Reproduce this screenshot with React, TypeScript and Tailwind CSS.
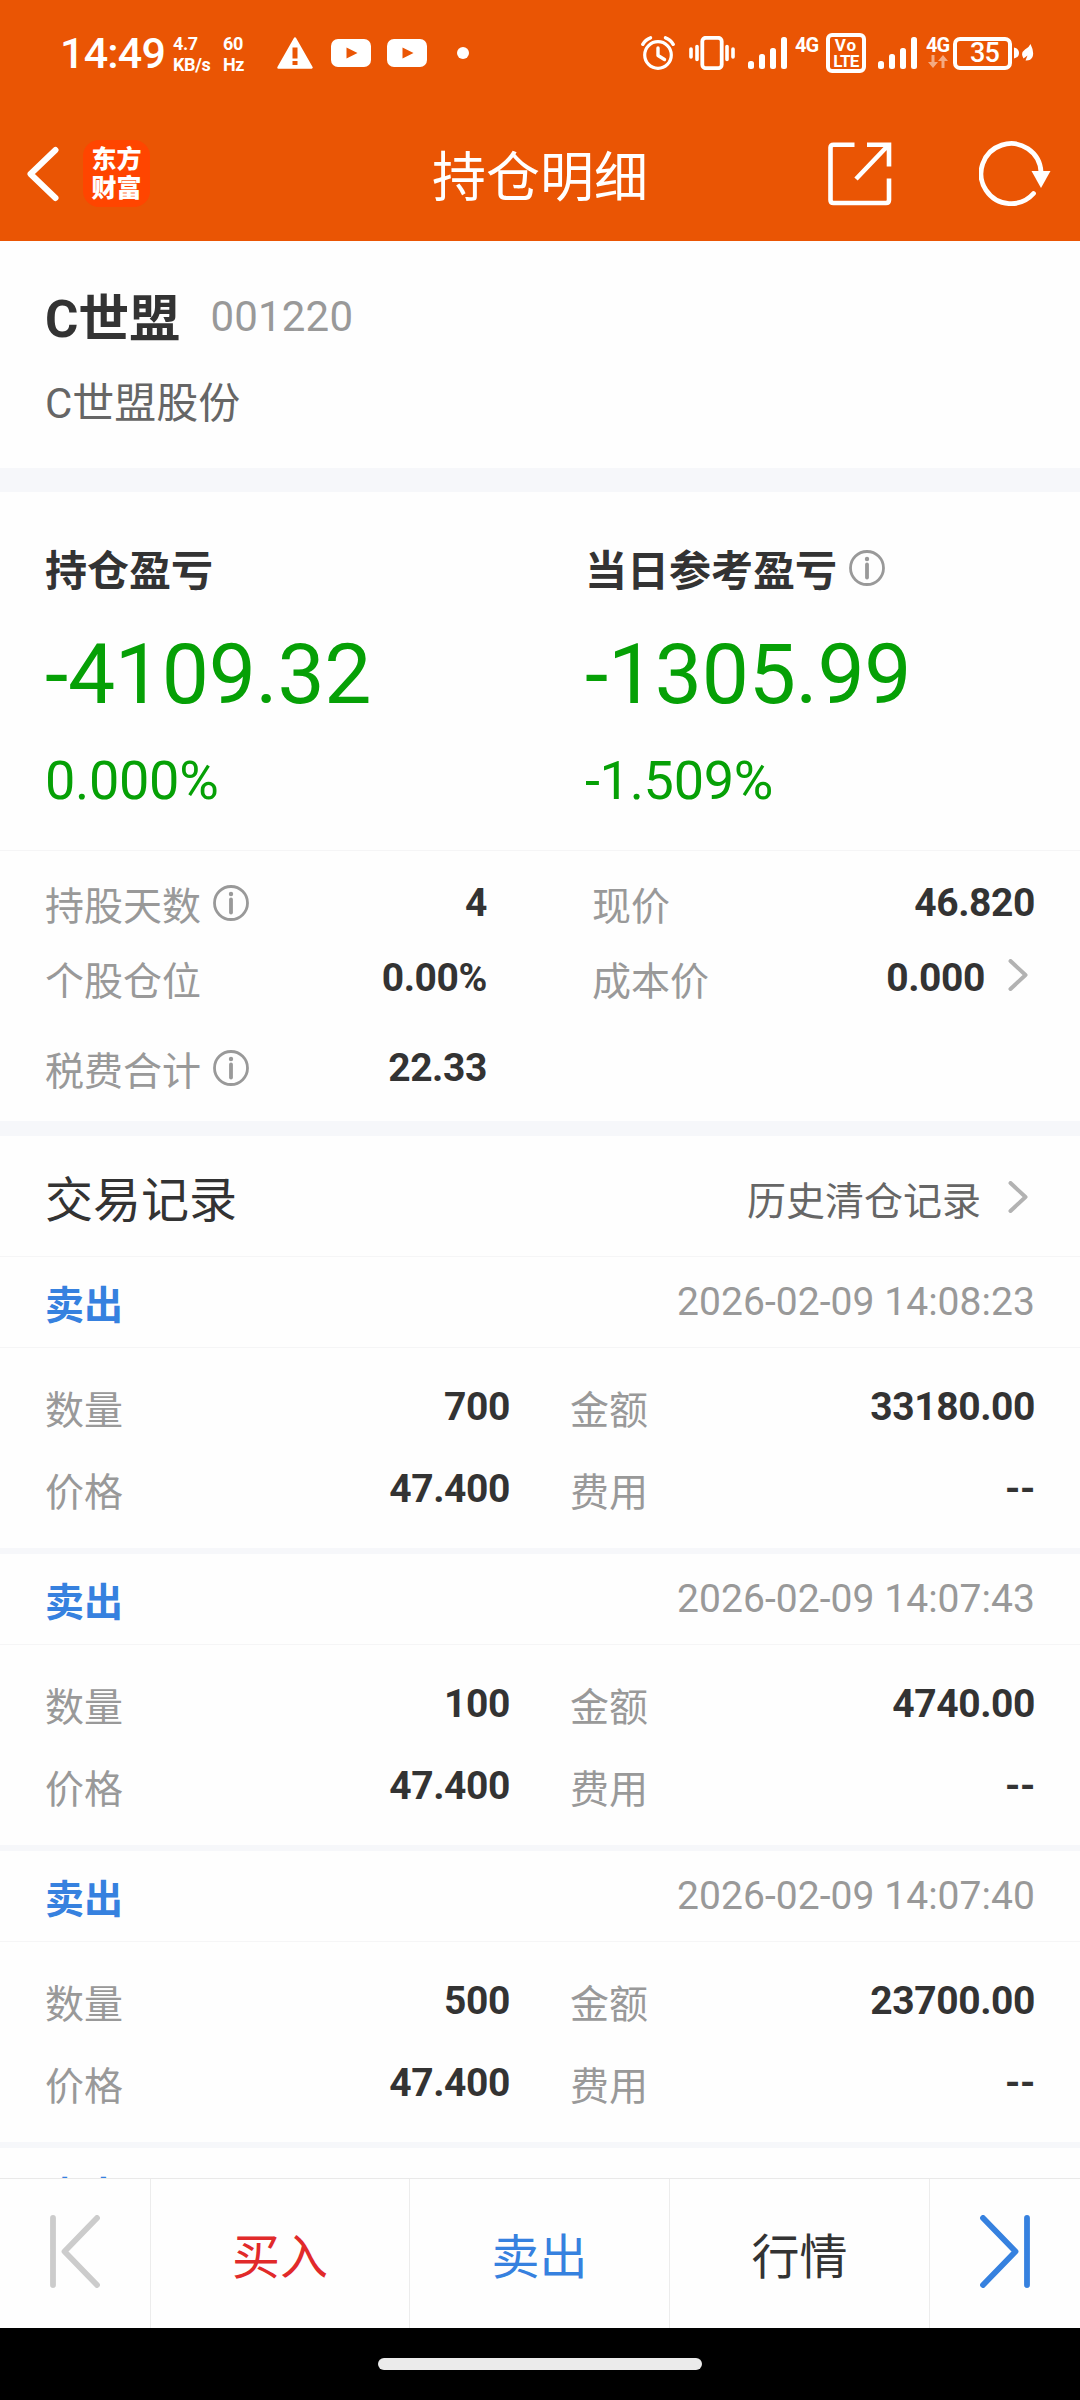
import { type ReactNode } from "react";

const records = [
  { side: "卖出", time: "2026-02-09 14:08:23", qty: "700", amount: "33180.00", price: "47.400", fee: "--" },
  { side: "卖出", time: "2026-02-09 14:07:43", qty: "100", amount: "4740.00", price: "47.400", fee: "--" },
  { side: "卖出", time: "2026-02-09 14:07:40", qty: "500", amount: "23700.00", price: "47.400", fee: "--" },
];

function InfoIcon() {
  return (
    <svg className="w-9 h-9 shrink-0" viewBox="0 0 36 36" fill="none" stroke="#999" strokeWidth="2.8">
      <circle cx="18" cy="18" r="16.5" />
      <path d="M18 14.5V27.5" strokeWidth="3.8" strokeLinecap="round" />
      <circle cx="18" cy="9" r="2.2" fill="#999" stroke="none" />
    </svg>
  );
}

function ChevronIcon() {
  return (
    <svg className="w-5 h-8 shrink-0" viewBox="0 0 20 32" fill="none" stroke="#b2b2b2" strokeWidth="4" strokeLinecap="round" strokeLinejoin="round">
      <path d="M2.5 2 17.5 16 2.5 30" />
    </svg>
  );
}

function SignalIcon() {
  return (
    <svg className="w-10 h-8" viewBox="0 0 40 32" fill="#fff">
      <rect x="0" y="24" width="6" height="8" rx="2.5" />
      <rect x="11" y="17" width="6" height="15" rx="2.5" />
      <rect x="22" y="11" width="6" height="21" rx="2.5" />
      <rect x="33" y="0" width="6" height="32" rx="2.5" />
    </svg>
  );
}

function YoutubeIcon() {
  return (
    <svg className="w-10 h-7" viewBox="0 0 40 28">
      <rect width="40" height="28" rx="7" fill="#fff" />
      <path d="M15.5 8.5v11L26.5 14z" fill="#ea5504" />
    </svg>
  );
}

function Network({ children }: { children?: ReactNode }) {
  return (
    <div className="w-[25px] h-[34px] flex flex-col items-center">
      <span className="text-[20px] leading-[18px] font-bold tracking-[-1px]">4G</span>
      {children}
    </div>
  );
}

function StatusBar() {
  return (
    <div className="h-[106px] flex items-center pl-[60px] pr-[46px] text-white">
      <span className="text-[43px] leading-[50px] font-medium tracking-[-0.8px] w-[113px] whitespace-nowrap">14:49</span>
      <div className="w-[50px] text-[18px] leading-[21px] font-bold tracking-[-0.4px] pt-0.5">
        <div>4.7</div>
        <div>KB/s</div>
      </div>
      <div className="w-[54px] text-[18px] leading-[21px] font-bold tracking-[-0.4px] pt-0.5">
        <div>60</div>
        <div>Hz</div>
      </div>
      <svg className="w-9 h-8" viewBox="0 0 36 32">
        <path d="M18 1.5 34.5 30.5H1.5z" fill="#fff" stroke="#fff" strokeWidth="2.5" strokeLinejoin="round" />
        <path d="M15.5 10.5h5v11h-5zM15.5 24h5v4h-5z" fill="#ea5504" />
      </svg>
      <div className="flex gap-4 ml-[18px]">
        <YoutubeIcon />
        <YoutubeIcon />
      </div>
      <span className="w-3 h-3 rounded-full bg-white ml-[30px]" />

      <div className="ml-auto flex items-center">
        {/* alarm */}
        <svg className="w-[34px] h-[34px]" viewBox="0 0 34 34" fill="none" stroke="#fff" strokeLinecap="round">
          <circle cx="17" cy="19" r="13.3" strokeWidth="3.2" />
          <path d="M17 12v7.500l6.500 4" strokeWidth="3.4" strokeLinejoin="round" />
          <path d="M1.8 8.3Q4.5 3.5 9.5 1.8M32.2 8.3Q29.5 3.5 24.5 1.8" strokeWidth="3.4" />
        </svg>
        {/* vibrate */}
        <svg className="w-[46px] h-[34px] ml-3.5" viewBox="0 0 46 34" fill="none" stroke="#fff" strokeLinecap="round">
          <rect x="13.3" y="1.8" width="19.4" height="30.4" rx="3.5" strokeWidth="3.8" />
          <path d="M2 13v8M8 10.500v13M38 10.500v13M44 13v8" strokeWidth="3.6" />
        </svg>
        <div className="ml-[13px]">
          <SignalIcon />
        </div>
        <div className="ml-1.5">
          <Network />
        </div>
        <div className="w-10 h-10 ml-[7px] border-4 border-white rounded-md flex flex-col items-center justify-center text-[17px] leading-[16px] font-bold">
          <span className="tracking-[1px]">Vo</span>
          <span className="tracking-[-0.7px]">LTE</span>
        </div>
        <div className="ml-3">
          <SignalIcon />
        </div>
        <div className="ml-[7px]">
          <Network>
            <svg className="w-5 h-[13px] mt-px opacity-50" viewBox="0 0 20 13" fill="#fff">
              <path d="M3.5 0h3v7H10L5 13 0 7h3.500zM13.5 13h3V6H20l-5-6-5 6h3.500z" />
            </svg>
          </Network>
        </div>
        <div className="w-[59px] h-[33px] ml-[3px] border-4 border-white rounded-[7px] flex items-center justify-center pl-1 text-[27px] leading-[25px] font-medium tracking-[-0.8px]">
          35
        </div>
        <svg className="w-[20px] h-[18px] ml-[2px]" viewBox="0 0 20 18" fill="#fff">
          <path d="M0 3.500Q5 4.500 5 9T0 14.500z" />
          <path d="M16.5 0Q20.5 8 18.5 13 16.5 17 11.5 16.5L13.5 11.5 9.5 14.5Q6 9 11 5.5 15 3.5 16.5 0z" />
        </svg>
      </div>
    </div>
  );
}

function AppBar() {
  return (
    <div className="h-[135px] grid grid-cols-[1fr_auto_1fr] items-center text-white">
      <div className="flex items-center pl-[26px]">
        <svg className="w-[34px] h-[56px]" viewBox="0 0 34 56" fill="none" stroke="#fff" strokeWidth="6" strokeLinecap="round" strokeLinejoin="round">
          <path d="M29.5 4 4.5 28 29.5 52" />
        </svg>
        <div className="w-[67px] h-[67px] ml-[23px] rounded-2xl bg-[#ff4500] flex flex-col items-center justify-center text-[25px] leading-[29px] font-black">
          <span>东方</span>
          <span>财富</span>
        </div>
      </div>
      <h1 className="text-[54px] leading-[64px] font-normal pt-2.5">持仓明细</h1>
      <div className="flex items-center justify-end pr-[29px]">
        <svg className="w-[64px] h-[64px]" viewBox="0 0 64 64" fill="none" stroke="#fff" strokeWidth="4.6">
          <path d="M26.5 2.7H5.5Q2.5 2.7 2.5 5.5V58Q2.5 61 5.5 61H58Q61 61 61 58V36.5" />
          <path d="M39 2.7H61V24.5M60 3.5 28 37" />
        </svg>
        <svg className="w-[72px] h-[66px] ml-[87px]" viewBox="0 0 72 66" fill="none">
          <path d="M54.5 52.5A30 30 0 1 1 62 31" stroke="#fff" strokeWidth="4.8" strokeLinecap="round" />
          <path d="M52.5 30H71.5L62 47z" fill="#fff" />
        </svg>
      </div>
    </div>
  );
}

function Profit({ label, value, percent, info }: { label: string; value: string; percent: string; info?: boolean }) {
  return (
    <div>
      <div className="flex items-center h-[60px]">
        <span className="text-[42px] leading-[60px] font-bold text-[#333] pt-1">{label}</span>
        {info && (
          <span className="ml-3 -mt-1">
            <InfoIcon />
          </span>
        )}
      </div>
      <div className="text-[84px] leading-[100px] tracking-[-0.3px] text-[#06a006] mt-[25px]">{value}</div>
      <div className="text-[54px] leading-[70px] tracking-[-0.3px] text-[#06a006] mt-[21px]">{percent}</div>
    </div>
  );
}

function Stat({ label, value, info, link }: { label: string; value: string; info?: boolean; link?: boolean }) {
  return (
    <div className="flex items-center text-[39px] leading-[48px]">
      <span className="text-[#999] pt-2">{label}</span>
      {info && (
        <span className="ml-3">
          <InfoIcon />
        </span>
      )}
      <span className="ml-auto font-bold tracking-[-0.4px] text-[#333]">{value}</span>
      {link && (
        <span className="ml-[23px] mr-[7px] -mt-1.5">
          <ChevronIcon />
        </span>
      )}
    </div>
  );
}

function RecordHeader({ side, time }: { side: string; time: string }) {
  return (
    <div className="shrink-0 h-[91px] border-b border-[#f5f5f6] px-[45px] flex items-center justify-between text-[39px] leading-[48px]">
      <span className="font-bold text-[#3681df] pt-2">{side}</span>
      <span className="text-[#999] tracking-[0.05px]">{time}</span>
    </div>
  );
}

function TradeRecord({ record }: { record: (typeof records)[number] }) {
  return (
    <div className="shrink-0 h-[297px] border-b-6 border-[#f6f7fa]">
      <RecordHeader side={record.side} time={record.time} />
      <div className="pt-[18px] px-[45px] grid grid-cols-[465px_465px] gap-x-[60px] auto-rows-[82px]">
        <Stat label="数量" value={record.qty} />
        <Stat label="金额" value={record.amount} />
        <Stat label="价格" value={record.price} />
        <Stat label="费用" value={record.fee} />
      </div>
    </div>
  );
}

export default function App() {
  return (
    <div className="w-[1080px] h-[2400px] overflow-hidden flex flex-col bg-[#fefefe] font-['Roboto','Noto_Sans_CJK_SC',sans-serif]">
      <header className="bg-[#ea5504] shrink-0">
        <StatusBar />
        <AppBar />
      </header>

      <main className="flex-1 min-h-0 overflow-hidden flex flex-col">
        {/* Stock */}
        <section className="shrink-0 h-[251px] border-b-24 border-[#f6f7fa] px-[45px] pt-[45px]">
          <div className="flex items-center h-[60px]">
            <span className="text-[51px] leading-[60px] font-bold text-[#333] pt-2">C世盟</span>
            <span className="text-[42px] leading-[60px] tracking-[0.2px] text-[#999] ml-[30px] pt-0.5">001220</span>
          </div>
          <div className="text-[42px] leading-[60px] text-[#666] mt-[28px]">C世盟股份</div>
        </section>

        {/* Profit */}
        <section className="shrink-0 h-[359px] border-b border-[#f5f5f6] pl-[45px] pt-[48px] grid grid-cols-[540px_1fr]">
          <Profit label="持仓盈亏" value="-4109.32" percent="0.000%" />
          <Profit label="当日参考盈亏" value="-1305.99" percent="-1.509%" info />
        </section>

        <section className="shrink-0 h-[285px] border-b-15 border-[#f6f7fa] px-[45px] pt-[15px] grid grid-cols-[442px_443px] justify-between grid-rows-[74px_76px_104px]">
          <Stat label="持股天数" value="4" info />
          <Stat label="现价" value="46.820" />
          <Stat label="个股仓位" value="0.00%" />
          <Stat label="成本价" value="0.000" link />
          <Stat label="税费合计" value="22.33" info />
        </section>

        {/* Trade history */}
        <section className="flex flex-col">
          <div className="shrink-0 h-[121px] border-b border-[#f5f5f6] pl-[45px] pr-[52px] flex items-center">
            <h2 className="text-[48px] leading-[60px] font-normal text-[#333] pt-2.5">交易记录</h2>
            <span className="ml-auto text-[39px] leading-[48px] text-[#666] pt-3">历史清仓记录</span>
            <span className="ml-[27px] pt-0.5">
              <ChevronIcon />
            </span>
          </div>
          {records.map((record) => (
            <TradeRecord key={record.time} record={record} />
          ))}
          <RecordHeader side="卖出" time="2026-02-09 14:07:36" />
        </section>
      </main>

      <nav className="shrink-0 h-[150px] border-t border-[#e9e9e9] grid grid-cols-[151px_259px_260px_260px_150px] text-[48px] leading-[60px]">
        <button className="flex items-center justify-center border-r border-[#ececec]">
          <svg className="w-[50px] h-[73px] -mt-1" viewBox="0 0 50 73" fill="none" stroke="#ccc" strokeWidth="5.8" strokeLinecap="round" strokeLinejoin="round">
            <path d="M3 3V70M47 3 14.5 36.5 47 70" />
          </svg>
        </button>
        <button className="border-r border-[#ececec] text-[#e12a2a] pt-2">买入</button>
        <button className="border-r border-[#ececec] text-[#3681df] pt-2">卖出</button>
        <button className="border-r border-[#ececec] text-[#333] pt-2">行情</button>
        <button className="flex items-center justify-center">
          <svg className="w-[50px] h-[73px] -mt-1" viewBox="0 0 50 73" fill="none" stroke="#3681df" strokeWidth="5.8" strokeLinecap="round" strokeLinejoin="round">
            <path d="M47 3V70M3 3 35.5 36.5 3 70" />
          </svg>
        </button>
      </nav>

      <div className="shrink-0 h-[72px] bg-black flex justify-center pt-[30px]">
        <div className="w-[324px] h-3 rounded-full bg-[#ebebeb]" />
      </div>
    </div>
  );
}
